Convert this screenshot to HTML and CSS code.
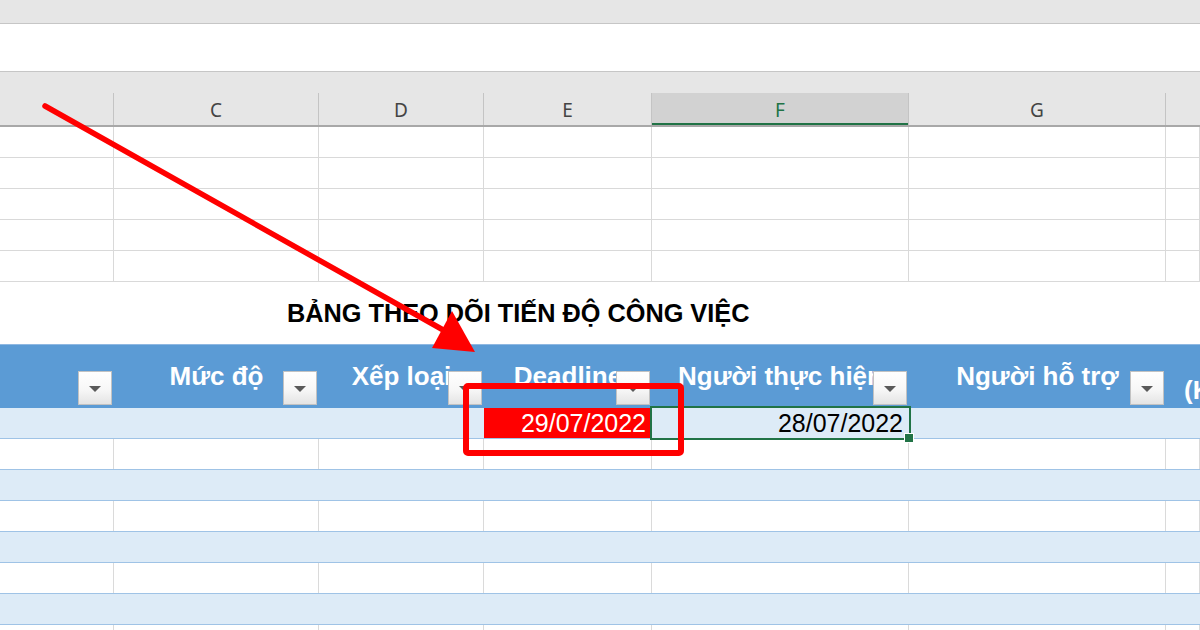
FILE: index.html
```html
<!DOCTYPE html>
<html lang="vi">
<head>
<meta charset="utf-8">
<title>Bảng theo dõi tiến độ công việc</title>
<link rel="stylesheet" href="styles.css">
</head>
<body>
<div class="sheet">
  <div class="topbar"></div>
  <div class="formula"></div>
  <div class="colhead">
    <div class="cols letters">
      <div class="lt"></div>
      <div class="lt">C</div>
      <div class="lt">D</div>
      <div class="lt">E</div>
      <div class="lt sel">F</div>
      <div class="lt">G</div>
      <div class="lt"></div>
    </div>
  </div>

  <div class="cols gr"><div></div><div></div><div></div><div></div><div></div><div></div><div></div></div>
  <div class="cols gr"><div></div><div></div><div></div><div></div><div></div><div></div><div></div></div>
  <div class="cols gr"><div></div><div></div><div></div><div></div><div></div><div></div><div></div></div>
  <div class="cols gr"><div></div><div></div><div></div><div></div><div></div><div></div><div></div></div>
  <div class="cols gr"><div></div><div></div><div></div><div></div><div></div><div></div><div></div></div>

  <div class="title">BẢNG THEO DÕI TIẾN ĐỘ CÔNG VIỆC</div>

  <div class="cols thead">
    <div class="th"><span class="dd"></span></div>
    <div class="th">Mức độ<span class="dd"></span></div>
    <div class="th">Xếp loại<span class="dd"></span></div>
    <div class="th">Deadline<span class="dd"></span></div>
    <div class="th">Người thực hiện<span class="dd"></span></div>
    <div class="th">Người hỗ trợ<span class="dd"></span></div>
    <div class="th th-last">(Kết quả)</div>
  </div>

  <div class="cols tr band">
    <div></div><div></div><div></div>
    <div class="late">29/07/2022</div>
    <div class="active">28/07/2022<span class="selbox"></span><span class="handle"></span></div>
    <div></div><div></div>
  </div>
  <div class="cols tr"><div></div><div></div><div></div><div></div><div></div><div></div><div></div></div>
  <div class="cols tr band"><div></div><div></div><div></div><div></div><div></div><div></div><div></div></div>
  <div class="cols tr"><div></div><div></div><div></div><div></div><div></div><div></div><div></div></div>
  <div class="cols tr band"><div></div><div></div><div></div><div></div><div></div><div></div><div></div></div>
  <div class="cols tr"><div></div><div></div><div></div><div></div><div></div><div></div><div></div></div>
  <div class="cols tr band"><div></div><div></div><div></div><div></div><div></div><div></div><div></div></div>
  <div class="cols tr"><div></div><div></div><div></div><div></div><div></div><div></div><div></div></div>

  <div class="mark-box"></div>
  <svg class="mark-arrow" width="1200" height="630" viewBox="0 0 1200 630">
    <line x1="45" y1="106" x2="445" y2="331" stroke="#ff0000" stroke-width="5.5" stroke-linecap="round"/>
    <polygon points="432,348 475,352 452,311" fill="#ff0000"/>
  </svg>
</div>
</body>
</html>
```

FILE: styles.css
```css
html, body {
  margin: 0;
  padding: 0;
  background: #ffffff;
}
body {
  width: 1200px;
  height: 630px;
  overflow: hidden;
  font-family: "Liberation Sans", Arial, sans-serif;
}
.sheet {
  position: relative;
  width: 1200px;
  height: 630px;
  overflow: hidden;
}
.topbar {
  height: 23px;
  background: #e6e6e6;
  border-bottom: 1px solid #c6c6c6;
}
.formula {
  height: 47px;
  background: #ffffff;
  border-bottom: 1px solid #c6c6c6;
}
.colhead {
  background: #e6e6e6;
  padding-top: 21px;
  border-bottom: 2px solid #a8a8a8;
}
.cols {
  display: grid;
  grid-template-columns: 114px 205px 165px 168px 257px 257px 1fr;
}
.letters {
  height: 32px;
}
.lt {
  border-right: 1px solid #c4c4c4;
  display: flex;
  align-items: center;
  justify-content: center;
  font-family: "Noto Sans", "Open Sans", sans-serif;
  font-size: 19px;
  color: #444444;
  padding-top: 2px;
  box-sizing: border-box;
}
.lt:last-child {
  border-right: none;
}
.lt.sel {
  background: #d2d2d2;
  color: #217346;
  box-shadow: inset 0 -2px 0 #217346;
}
.gr {
  height: 30px;
  border-bottom: 1px solid #d9d9d9;
}
.gr > div {
  border-right: 1px solid #d9d9d9;
}
.title {
  height: 62px;
  display: flex;
  align-items: center;
  padding-left: 287px;
  font-size: 25.3px;
  font-weight: bold;
  color: #000000;
}
.thead {
  height: 64px;
  background: #5b9bd5;
  box-shadow: inset 0 1px 0 #8fb8e2;
}
.th {
  position: relative;
  display: flex;
  align-items: center;
  justify-content: center;
  white-space: nowrap;
  font-size: 26px;
  font-weight: bold;
  color: #ffffff;
  overflow: visible;
}
.th-last {
  justify-content: flex-start;
  align-items: flex-end;
  padding-left: 18px;
  padding-bottom: 3px;
  line-height: 30px;
  overflow: hidden;
}
.dd {
  position: absolute;
  right: 2px;
  top: 27px;
  width: 34px;
  height: 34px;
  box-sizing: border-box;
  border: 1px solid #c2c2c2;
  background: linear-gradient(#ffffff 0%, #f7f7f7 55%, #e4e4e4 100%);
  display: flex;
  align-items: center;
  justify-content: center;
}
.dd::after {
  content: "";
  width: 0;
  height: 0;
  border-left: 6px solid transparent;
  border-right: 6px solid transparent;
  border-top: 6px solid #5a5a5a;
  margin-top: 2px;
}
.tr {
  height: 30px;
  border-bottom: 1px solid #9fc3e6;
  background: #ffffff;
}
.tr > div {
  border-right: 1px solid #dadada;
}
.tr.band {
  background: #ddebf7;
}
.tr.band > div {
  border-right: none;
}
.tr > .late {
  background: #ff0000;
  color: #ffffff;
  font-size: 25px;
  text-align: right;
  padding-right: 6px;
  line-height: 30px;
}
.tr > .active {
  position: relative;
  color: #000000;
  font-size: 25px;
  text-align: right;
  padding-right: 6px;
  line-height: 30px;
}
.selbox {
  position: absolute;
  left: -2px;
  top: -2px;
  right: -2px;
  bottom: -2px;
  border: 2px solid #217346;
}
.handle {
  position: absolute;
  right: -4px;
  bottom: -4px;
  width: 8px;
  height: 8px;
  background: #217346;
  box-shadow: 0 0 0 1px #ffffff;
}
.mark-box {
  position: absolute;
  left: 463px;
  top: 383px;
  width: 221px;
  height: 73px;
  box-sizing: border-box;
  border: 6px solid #ff0000;
  border-radius: 5px;
}
.mark-arrow {
  position: absolute;
  left: 0;
  top: 0;
  pointer-events: none;
}
```
